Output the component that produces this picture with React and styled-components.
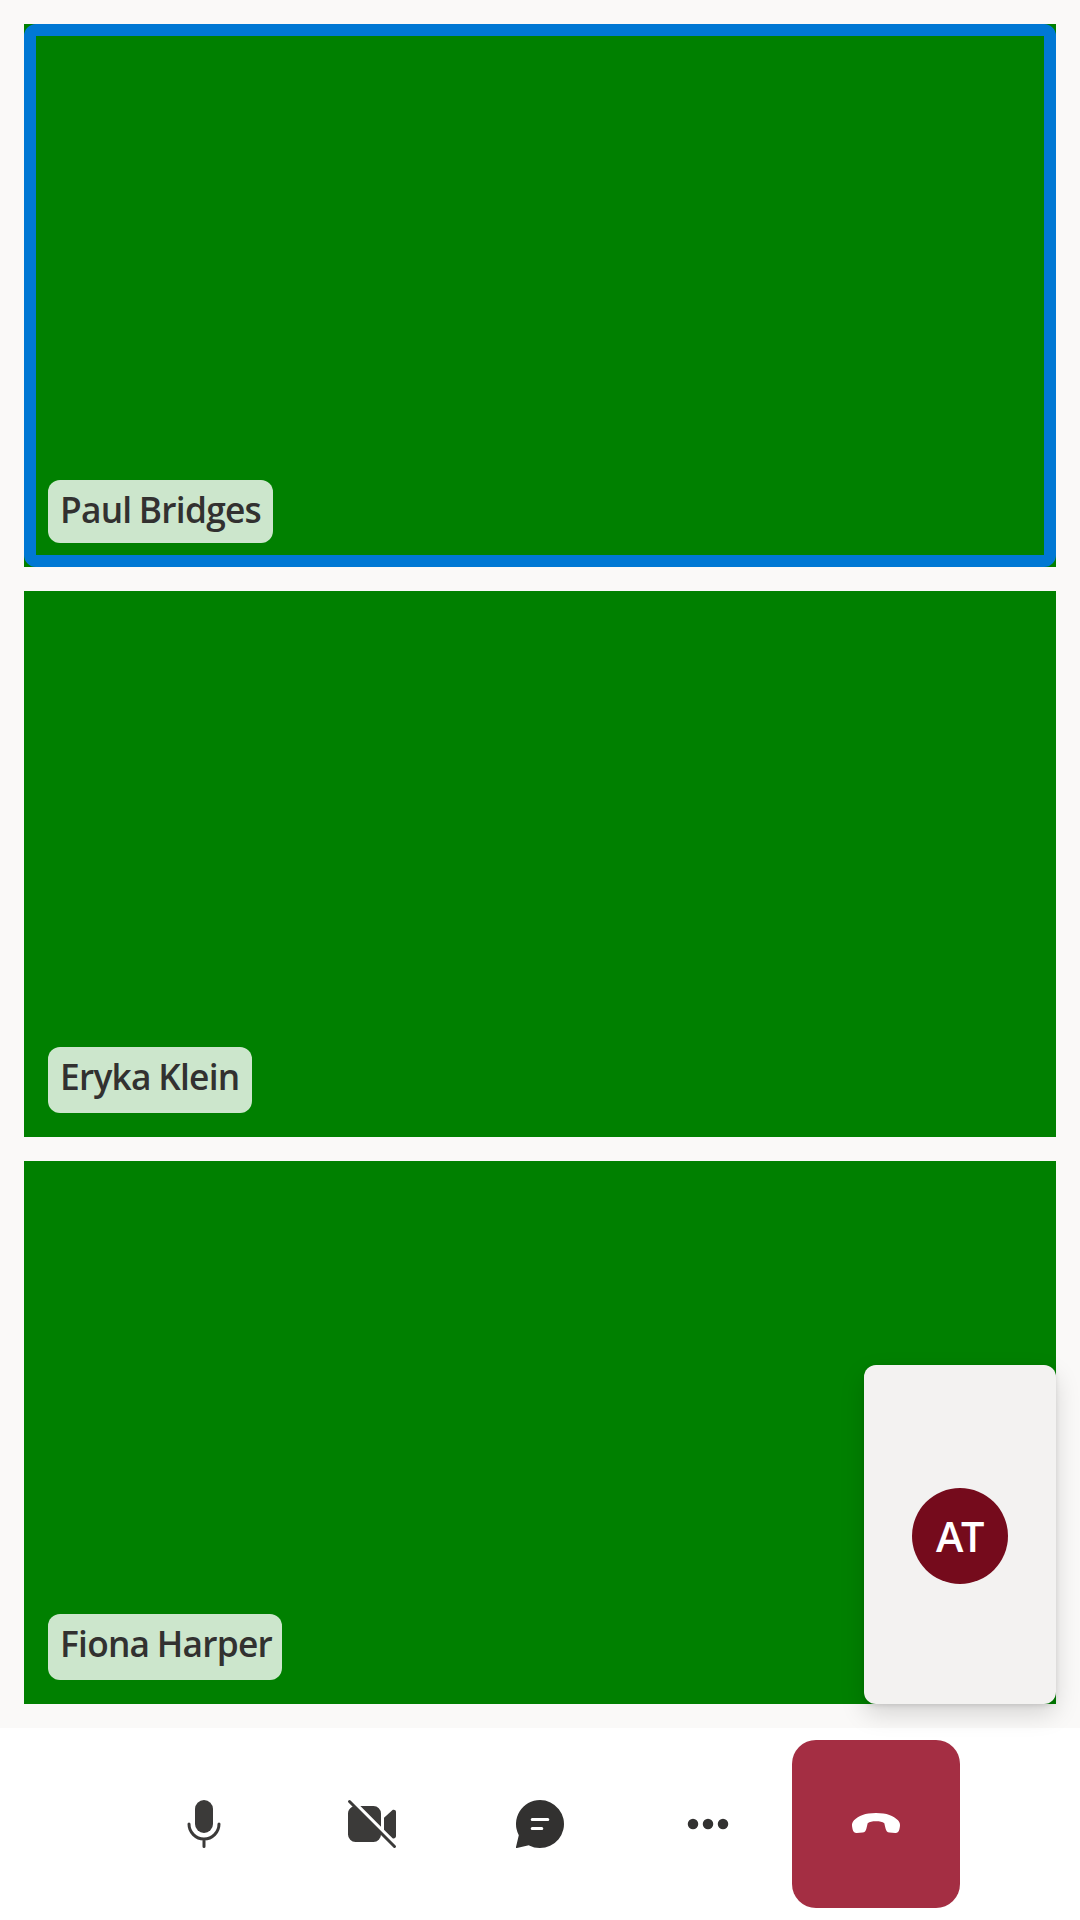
import React from 'react';
import styled, { createGlobalStyle } from 'styled-components';

const GlobalStyle = createGlobalStyle`
  *, *::before, *::after { box-sizing: border-box; }
  body {
    margin: 0;
    background: #ffffff;
    font-family: 'Segoe UI', 'Open Sans', 'Noto Sans', sans-serif;
    color: #323130;
  }
  button { font: inherit; color: inherit; }
`;

const Call = styled.main`
  display: flex;
  flex-direction: column;
  width: 1080px;
  height: 1920px;
  overflow: hidden;
`;

const Stage = styled.section`
  position: relative;
  flex: 1;
  display: grid;
  grid-template-rows: 543px 546px 543px;
  gap: 24px;
  padding: 24px;
  background: #faf9f8;
`;

const Tile = styled.article`
  position: relative;
  display: flex;
  align-items: flex-end;
  padding: 24px;
  background: #008000;

  &::after {
    content: '';
    display: ${(p) => (p.$speaking ? 'block' : 'none')};
    position: absolute;
    inset: 0;
    border: 12px solid #0078d4;
    border-radius: 12px;
    pointer-events: none;
  }
`;

const NameTag = styled.div`
  width: ${(p) => p.$width}px;
  height: ${(p) => p.$height}px;
  padding: 0 12px;
  border-radius: 12px;
  background: rgba(255, 255, 255, 0.8);
  font-size: 35.3px;
  font-weight: 580;
  line-height: 58px;
  letter-spacing: -0.75px;
  word-spacing: -1px;
  white-space: nowrap;
`;

const LocalPreview = styled.aside`
  position: absolute;
  right: 24px;
  bottom: 24px;
  z-index: 1;
  display: flex;
  align-items: center;
  justify-content: center;
  width: 192px;
  height: 339px;
  padding-top: 3px;
  border-radius: 12px;
  background: #f3f2f1;
  box-shadow: 0 10px 24px rgba(0, 0, 0, 0.15), 0 1.8px 5.4px rgba(0, 0, 0, 0.108);
`;

const Avatar = styled.div`
  display: flex;
  align-items: center;
  justify-content: center;
  width: 96px;
  height: 96px;
  padding-right: 2px;
  border-radius: 50%;
  background: #750b1c;
  color: #ffffff;
  font-size: 41.5px;
  font-weight: 580;
  line-height: 94px;
  letter-spacing: -2.5px;
`;

const ControlBar = styled.nav`
  display: flex;
  align-items: center;
  justify-content: center;
  height: 192px;
  background: #ffffff;
`;

const ControlButton = styled.button`
  position: relative;
  z-index: 2;
  display: flex;
  align-items: center;
  justify-content: center;
  width: 168px;
  height: 168px;
  padding: 0;
  border: 0;
  border-radius: 24px;
  background: ${(p) => (p.$danger ? '#a42e43' : 'transparent')};
  color: ${(p) => (p.$danger ? '#ffffff' : p.$soft ? '#3b3a39' : '#323130')};
`;

const Glyph = styled.svg.attrs({ viewBox: '0 0 20 20', 'aria-hidden': true })`
  display: block;
  width: 60px;
  height: 60px;
  fill: currentColor;
`;

const MicIcon = () => (
  <Glyph>
    <rect x="7" y="2" width="6" height="11" rx="3" />
    <path d="M5 10a5 5 0 0 0 10 0M10 15v2.5" fill="none" stroke="currentColor" strokeLinecap="round" />
  </Glyph>
);

const CameraOffIcon = () => (
  <Glyph>
    <path d="M3.3 4.3 3.9 4 13 13v.5a2.5 2.5 0 0 1-2.5 2.5h-6A2.5 2.5 0 0 1 2 13.5v-7c0-.93.51-1.75 1.3-2.2Z" />
    <path d="M6.12 4h4.38A2.5 2.5 0 0 1 13 6.5v4.38L6.12 4Z" />
    <path d="M14 7.93v3.95l2.85 2.85c.5.25 1.15-.1 1.15-.7V6.04c0-.66-.75-.98-1.24-.6L14 7.93Z" />
    <path d="m2.5 2.5 15 15" fill="none" stroke="currentColor" strokeLinecap="round" />
  </Glyph>
);

const ChatIcon = () => (
  <Glyph>
    <path d="M10 2a8 8 0 1 1-3.61 15.14l-.12-.07L2.3 18a.26.26 0 0 1-.3-.3l.93-3.97-.07-.12A8 8 0 0 1 10 2Z" />
    <path d="M7.4 8.5h5.2M7.4 11.5h3.2" fill="none" stroke="#ffffff" strokeLinecap="round" />
  </Glyph>
);

const MoreIcon = () => (
  <Glyph>
    <circle cx="5" cy="10" r="1.75" />
    <circle cx="10" cy="10" r="1.75" />
    <circle cx="15" cy="10" r="1.75" />
  </Glyph>
);

const HangUpIcon = () => (
  <Glyph>
    <path d="m17.96 10.94-.16.83c-.15.78-.6 1.25-1.42 1.22l-1.9-.13c-.72-.06-1.06-.56-1.27-1.3-.28-.98-.43-1.8-.43-1.8C12.1 9.3 11.3 9.1 10 9.1s-2.1.2-2.78.66c0 0-.15.82-.43 1.8-.21.74-.55 1.24-1.27 1.3l-1.9.13c-.82.03-1.27-.44-1.42-1.22l-.16-.83c-.15-.82.06-1.61.63-2.19C4.2 7.2 6.36 6.3 10 6.3s5.8.9 7.33 2.45c.57.58.78 1.37.63 2.19Z" />
  </Glyph>
);

const participants = [
  { name: 'Paul Bridges', width: 225, height: 63, speaking: true },
  { name: 'Eryka Klein', width: 204, height: 66 },
  { name: 'Fiona Harper', width: 234, height: 66 },
];

export default function App() {
  return (
    <>
      <GlobalStyle />
      <Call>
        <Stage>
          {participants.map((p) => (
            <Tile key={p.name} $speaking={p.speaking}>
              <NameTag $width={p.width} $height={p.height}>
                {p.name}
              </NameTag>
            </Tile>
          ))}
          <LocalPreview>
            <Avatar>AT</Avatar>
          </LocalPreview>
        </Stage>
        <ControlBar>
          <ControlButton $soft aria-label="Mute"><MicIcon /></ControlButton>
          <ControlButton $soft aria-label="Turn on camera"><CameraOffIcon /></ControlButton>
          <ControlButton aria-label="Chat"><ChatIcon /></ControlButton>
          <ControlButton aria-label="More"><MoreIcon /></ControlButton>
          <ControlButton $danger aria-label="Leave"><HangUpIcon /></ControlButton>
        </ControlBar>
      </Call>
    </>
  );
}
